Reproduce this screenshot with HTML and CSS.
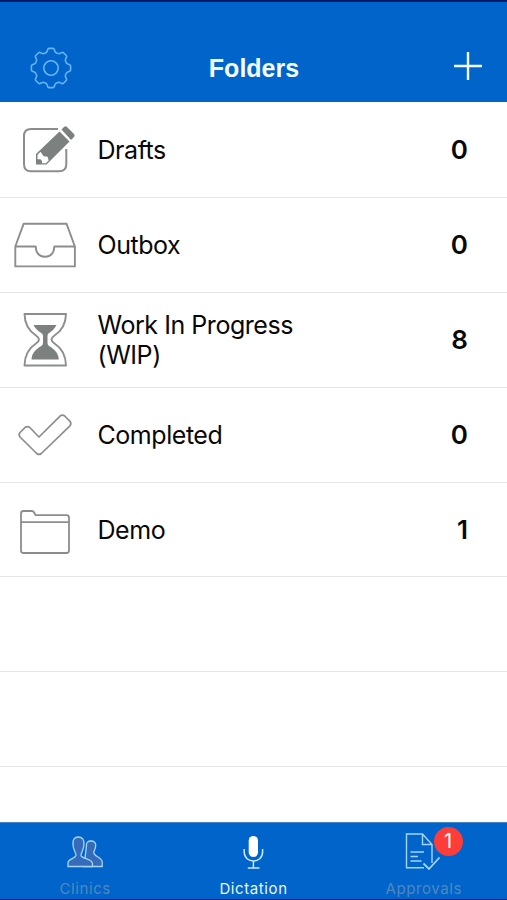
FILE: index.html
```
<!DOCTYPE html>
<html lang="en">
<head>
<meta charset="utf-8">
<title>Folders</title>
<link rel="stylesheet" href="styles.css">
</head>
<body>
<div class="app">
  <header class="navbar">
    <svg class="gear" viewBox="-21 -21 42 42" width="42" height="42">
      <defs><path id="tooth" d="M-6.1 -14.8C-4.7 -15.4 -4.2 -15.8 -3.9 -16.8L-3.3 -18.6Q-3 -19.6 -2 -19.6H2Q3 -19.6 3.3 -18.6L3.9 -16.8C4.2 -15.8 4.7 -15.4 6.1 -14.8"/></defs>
      <use href="#tooth"/><use href="#tooth" transform="rotate(45)"/><use href="#tooth" transform="rotate(90)"/><use href="#tooth" transform="rotate(135)"/><use href="#tooth" transform="rotate(180)"/><use href="#tooth" transform="rotate(225)"/><use href="#tooth" transform="rotate(270)"/><use href="#tooth" transform="rotate(315)"/>
      <circle r="7.2"/>
    </svg>
    <h1 class="title">Folders</h1>
    <svg class="plus" viewBox="0 0 28 28" width="28" height="28"><path d="M0 14H28M14 0V28"/></svg>
  </header>
  <main class="list">
    <div class="row">
      <svg class="icon" viewBox="0 102 98 95">
        <path d="M58 129H31Q24 129 24 136V164Q24 171.300 31 171.300H59Q66.300 171.300 66.300 164V149" stroke-width="2"/>
        <path class="solid" d="M61.500 129.500L64 127Q65.500 125.700 67 127L74 134Q75.300 135.500 74 137L71 140Z"/>
        <path class="solid" d="M59.500 131.500L69.500 141.500L50 161L46.500 164.500H36V154Z"/>
        <path class="blank" d="M40.500 151.800L37.500 154.800V159.300H40.500L42 161V163.300H45.800L48.700 160.500L47.600 156.800L43.600 156.200Z"/>
      </svg>
      <span class="label">Drafts</span><span class="count">0</span>
    </div>
    <div class="row">
      <svg class="icon" viewBox="0 198 98 95">
        <path d="M15.300 246.500L23.700 223.700H66.500L74.900 246.500V266.400H15.300ZM15.300 246.500H35.700C36 253 39 256.700 45 256.700S54 253 54.300 246.500H74.900" stroke-width="1.900"/>
      </svg>
      <span class="label">Outbox</span><span class="count">0</span>
    </div>
    <div class="row">
      <svg class="icon" viewBox="0 293 98 95">
        <path d="M24.500 314H66C65.800 324 61.500 331 54.500 335.500Q51.500 337.500 51.500 339.500T54.500 343.500C61.500 348 65.800 355 66 365.500H24.500C24.700 355 29 348 36 343.500Q39 341.500 39 339.500T36 335.500C29 331 24.700 324 24.500 314Z" stroke-width="1.900"/>
        <path class="solid" d="M33.500 325H56.500C54.500 329 51.500 331.500 48.800 333.200Q47.500 334 47.500 336V343Q47.500 345 49 346C55 349.500 58.500 353.500 58.800 359.500H31.500C31.800 353.500 35.300 349.500 41.300 346Q43 345 43 343V336Q43 334 41.500 333.200C38.800 331.500 35.500 329 33.500 325Z"/>
      </svg>
      <span class="label">Work In Progress<br>(WIP)</span><span class="count">8</span>
    </div>
    <div class="row">
      <svg class="icon" viewBox="0 388 98 95">
        <path d="M20 432.500L25.200 427.300Q27.500 425.700 29.800 427.500L39 437L60.300 415.800Q62.500 414.300 64.700 416L70 421.300Q71.700 423.500 70 425.800L41.300 453.500Q39 455.400 36.700 453.500L20 437Q18.200 434.700 20 432.500Z" stroke-width="1.700"/>
      </svg>
      <span class="label">Completed</span><span class="count">0</span>
    </div>
    <div class="row">
      <svg class="icon" viewBox="0 483 98 95">
        <path d="M21 522V513.500Q21 511 23.500 511H31.500Q33.500 511 34.200 512.500L35.500 515.200H66.500Q69 515.200 69 517.700V550.500Q69 553 66.500 553H23.500Q21 553 21 550.500ZM21 522.200H69" stroke-width="1.800"/>
      </svg>
      <span class="label">Demo</span><span class="count">1</span>
    </div>
    <div class="row"></div>
    <div class="row"></div>
  </main>
  <nav class="tabs">
    <a class="tab">
      <svg viewBox="64 832 42 40" width="42" height="40">
        <path class="person" d="M86.500 845.500C86 842.500 88 841 91 841S96 842.800 95.700 846C95.500 849 94 851 93.800 852C93.500 857 102 857 102.200 862V866.500H84Z"/>
        <path class="person" d="M68 866.500V863C68 858.500 75 859 76 855.500C76.500 853.500 73 850 73 844.500C72.500 839.500 74.500 837 78.300 837S84.500 839.500 84 844.500C83.800 850 80.500 853.500 81 855.500C82 859 92 858.500 92.500 863.500V866.500Z"/>
      </svg>
      <span class="caption">Clinics</span>
    </a>
    <a class="tab active">
      <svg viewBox="232 832 42 40" width="42" height="40">
        <rect class="mic" x="248.700" y="836" width="9.300" height="21" rx="4.650"/>
        <path d="M244.200 849V852C244.200 864 262.600 864 262.600 852V849M253.400 861V868M247.800 868H259.500" stroke-width="1.500"/>
      </svg>
      <span class="caption">Dictation</span>
    </a>
    <a class="tab approvals">
      <svg viewBox="403 832 42 40" width="42" height="40">
        <path d="M424 867.700H406.500V834H422.500L432 844.500V863M422.500 834V844.500H432M410.500 852H424M410.500 856.500H418M410.500 861H421.500" stroke-width="1.400"/>
        <path class="check" d="M423.500 863.500L429 869L439.500 857.500"/>
      </svg>
      <span class="badge">1</span>
      <span class="caption">Approvals</span>
    </a>
  </nav>
</div>
</body>
</html>
```
FILE: styles.css
```
* { box-sizing: border-box; }
body { margin: 0; background: #fff; color: #080808; font-family: Inter, "Liberation Sans", sans-serif; }
.app { display: flex; flex-direction: column; height: 900px; }
.navbar {
  height: 102px;
  padding: 32px 25px 0 30px;
  border-top: 2px solid #001a66;
  background: #0064cb;
  display: grid;
  grid-template-columns: 42px 1fr 28px;
  align-items: center;
  flex: none;
}
svg { display: block; fill: none; }
.gear { stroke: #69b4f5; stroke-width: 1.6; }
.plus { stroke: #f4fbff; stroke-width: 2.4; margin-bottom: 4px; }
.title { margin: 0 0 0 -18px; color: #f4fbff; text-align: center; font: bold 25px/30px "Liberation Sans", sans-serif; }
.list { flex: 1; display: grid; grid-template-rows: 96px 95px 95px 95px 94px 95px 95px; }
.row { display: grid; grid-template-columns: 97.5px 1fr auto; grid-template-rows: 94px; align-items: center; padding-right: 39px; border-bottom: 1px solid #e5e5e5; }
.row:first-child { grid-template-rows: 95px; }
.icon { width: 98px; height: 95px; align-self: start; margin-bottom: -1px; stroke: #8c8e8d; stroke-linejoin: round; }
.icon .solid { fill: #7c807e; stroke: none; }
.icon .blank { fill: #fff; stroke: none; }
.label { font-size: 25px; line-height: 30px; letter-spacing: -0.45px; }
.count { font-size: 26px; line-height: 30px; font-weight: 600; }
.row:not(:first-child) .label, .row:not(:first-child) .count { margin-bottom: 1px; }
.tabs { height: 78px; flex: none; padding: 0 1px; display: grid; grid-template-columns: repeat(3, 1fr); background: #0064cb; border-top: 1px solid #4384c4; border-bottom: 1px solid #001f70; }
.tab { position: relative; display: flex; flex-direction: column; align-items: center; padding-top: 9px; color: #5088bd; stroke: #a4d4fa; }
.tab.active { color: #e7f6ff; stroke: #c8e8ff; }
.tab.approvals { padding-left: 4px; }
.tab .caption { font-size: 15px; line-height: 18px; margin-top: 8px; letter-spacing: 0.6px; stroke: none; }
.person { fill: #356bb9; stroke-width: 1.3; }
.mic { fill: #fff; stroke: none; }
.check { stroke-width: 1.8; }
.badge { position: absolute; left: 96px; top: 4px; width: 29px; height: 29px; border-radius: 50%; background: #fc3d39; color: #fff; stroke: none; font-size: 20px; line-height: 29px; text-align: center; }
```
